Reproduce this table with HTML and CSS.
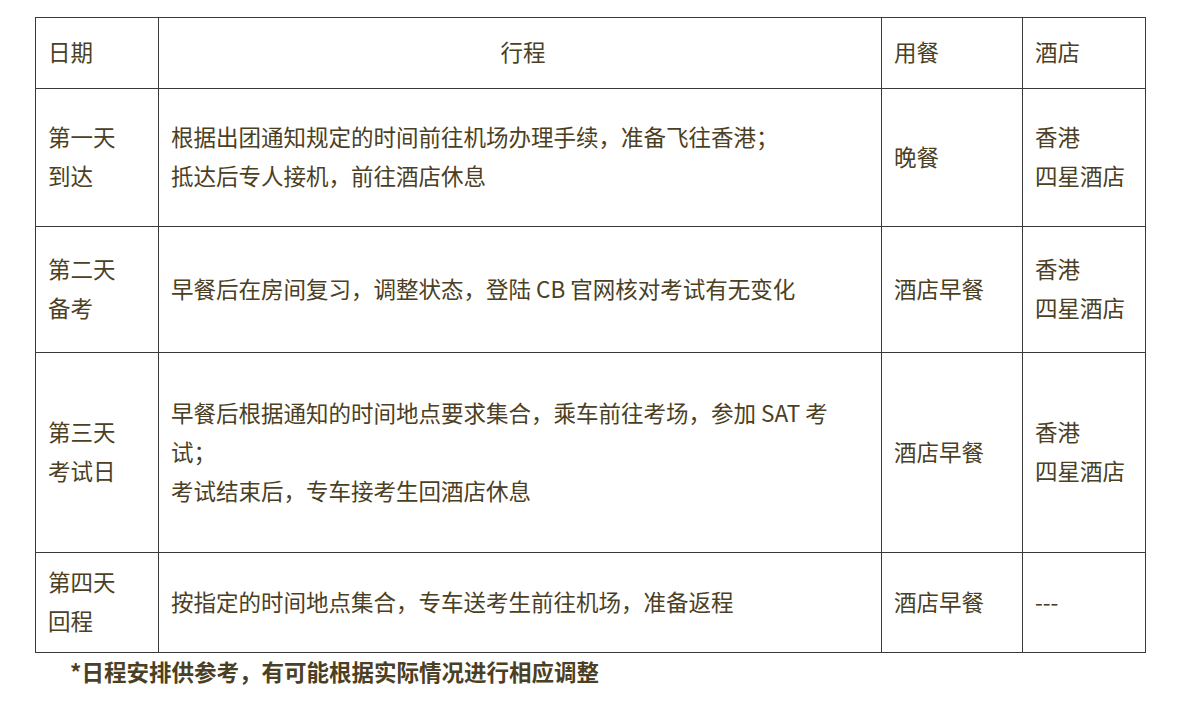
FILE: index.html
```html
<!DOCTYPE html>
<html lang="zh-CN">
<head>
<meta charset="utf-8">
<title>行程安排</title>
<link rel="stylesheet" href="styles.css">
</head>
<body>
<div class="page">
  <table class="schedule">
    <colgroup>
      <col class="c-date">
      <col class="c-plan">
      <col class="c-meal">
      <col class="c-hotel">
    </colgroup>
    <tr class="r-head">
      <td>日期</td>
      <td class="center">行程</td>
      <td>用餐</td>
      <td>酒店</td>
    </tr>
    <tr class="r-1">
      <td>第一天<br>到达</td>
      <td>根据出团通知规定的时间前往机场办理手续，准备飞往香港；<br>抵达后专人接机，前往酒店休息</td>
      <td>晚餐</td>
      <td>香港<br>四星酒店</td>
    </tr>
    <tr class="r-2">
      <td>第二天<br>备考</td>
      <td>早餐后在房间复习，调整状态，登陆 CB 官网核对考试有无变化</td>
      <td>酒店早餐</td>
      <td>香港<br>四星酒店</td>
    </tr>
    <tr class="r-3">
      <td>第三天<br>考试日</td>
      <td>早餐后根据通知的时间地点要求集合，乘车前往考场，参加 SAT 考<br>试；<br>考试结束后，专车接考生回酒店休息</td>
      <td>酒店早餐</td>
      <td>香港<br>四星酒店</td>
    </tr>
    <tr class="r-4">
      <td>第四天<br>回程</td>
      <td>按指定的时间地点集合，专车送考生前往机场，准备返程</td>
      <td>酒店早餐</td>
      <td>---</td>
    </tr>
  </table>
  <p class="note">*日程安排供参考，有可能根据实际情况进行相应调整</p>
</div>
</body>
</html>
```

FILE: styles.css
```css
html, body {
  margin: 0;
  padding: 0;
  background: #ffffff;
}

body {
  font-family: "Microsoft YaHei", "Noto Sans CJK SC", "Noto Sans", sans-serif;
  color: #4b4024;
}

.page {
  padding: 17px 0 0 35px;
}

.schedule {
  border-collapse: collapse;
  table-layout: fixed;
  width: 1110px;
  font-size: 22.5px;
  line-height: 39px;
}

.c-date { width: 123px; }
.c-plan { width: 723px; }
.c-meal { width: 141px; }
.c-hotel { width: 123px; }

.schedule td {
  border: 1px solid #3a3a3a;
  padding: 0 6px 3px 12px;
  vertical-align: middle;
  text-align: left;
}

.schedule td.center {
  text-align: center;
}

.r-head { height: 71px; }
.r-1 { height: 138px; }
.r-2 { height: 126px; }
.r-3 { height: 200px; }
.r-4 { height: 100px; }

.note {
  margin: 3px 0 0 35px;
  font-size: 22.5px;
  line-height: 30px;
  font-weight: bold;
}
```
